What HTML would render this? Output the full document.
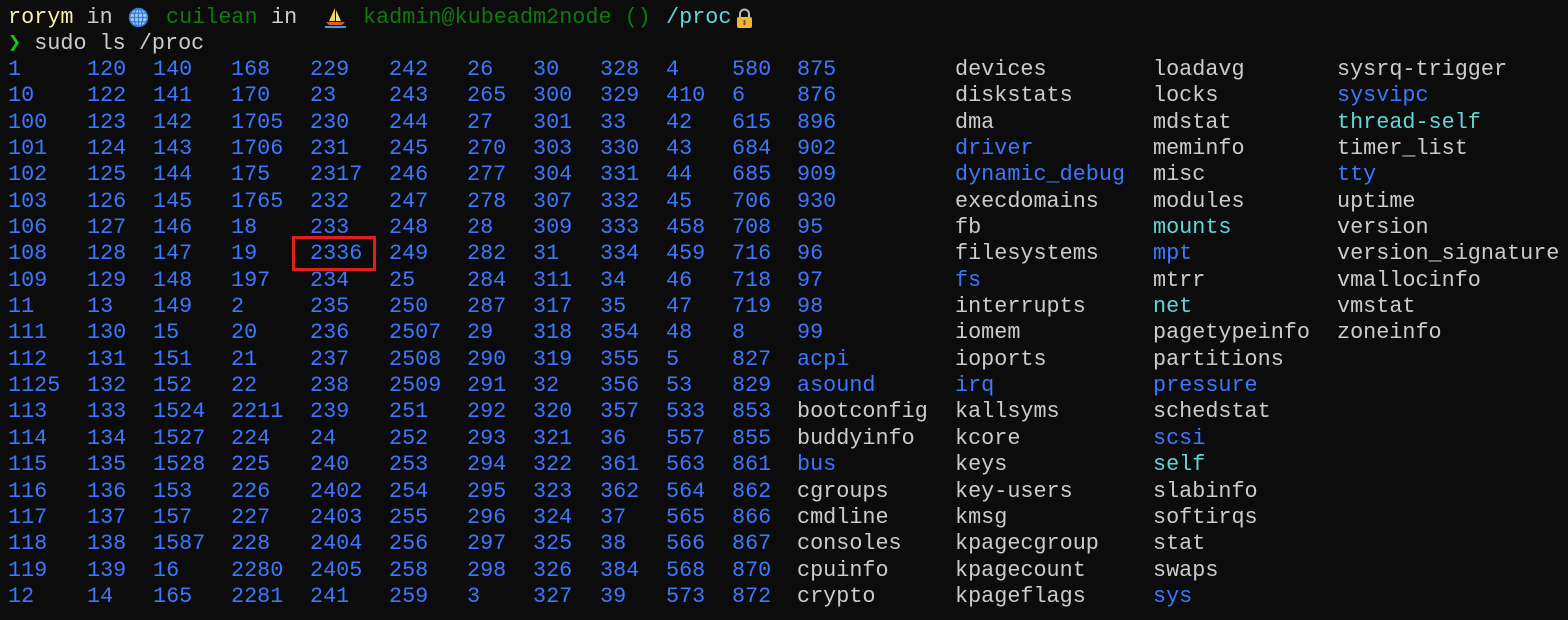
<!DOCTYPE html>
<html><head><meta charset="utf-8"><style>
html,body{margin:0;padding:0;background:#0c0c0c;width:1568px;height:620px;overflow:hidden}
body{position:relative;font-family:"Liberation Mono",monospace;font-size:21.8px;line-height:26.35px;color:#cccccc}
.c{position:absolute;top:57px;white-space:pre}
.b{color:#3b78ff}.y{color:#f9f1a5}.g{color:#0e7a0e}.cy{color:#61d6d6}.gg{color:#16c60c}
.l{position:absolute;white-space:pre}
</style></head><body>
<div class="l" style="left:8px;top:5px"><span class="y">rorym</span> in</div>
<svg style="position:absolute;left:128px;top:7px" width="21" height="21" viewBox="0 0 20 20"><circle cx="10" cy="10" r="8.5" fill="#9ccbf2" stroke="#3a7bd5" stroke-width="1.5"/><ellipse cx="10" cy="10" rx="4" ry="8.5" fill="none" stroke="#3a7bd5" stroke-width="1.2"/><path d="M1.5 10H18.5M3 6H17M3 14H17M10 1.5V18.5" stroke="#3a7bd5" stroke-width="1.2"/></svg>
<div class="l g" style="left:166px;top:5px">cuilean</div>
<div class="l" style="left:271px;top:5px">in</div>
<svg style="position:absolute;left:325px;top:7px" width="21" height="21" viewBox="0 0 21 21"><path d="M10 1L4 14H10Z" fill="#f4d25a"/><path d="M11 3L16 14H11Z" fill="#f7e08a"/><path d="M1 15H20L17 18H4Z" fill="#e2572b"/><path d="M0 19H21V21H0Z" fill="#2aa5e8"/></svg>
<div class="l g" style="left:363px;top:5px">kadmin@kubeadm2node ()</div>
<div class="l cy" style="left:666px;top:5px">/proc</div>
<svg style="position:absolute;left:736px;top:8px" width="17" height="20" viewBox="0 0 17 20"><path d="M4 9V6a4.5 4.5 0 0 1 9 0v3" fill="none" stroke="#b9b9b9" stroke-width="2"/><rect x="1" y="9" width="15" height="11" rx="2" fill="#f2b632"/><rect x="7.5" y="12" width="2" height="5" fill="#7a5a10"/></svg>
<div class="l" style="left:8px;top:31px"><span class="gg">❯</span> sudo ls /proc</div>

<div class="c b" style="left:8px">1
10
100
101
102
103
106
108
109
11
111
112
1125
113
114
115
116
117
118
119
12</div>
<div class="c b" style="left:87px">120
122
123
124
125
126
127
128
129
13
130
131
132
133
134
135
136
137
138
139
14</div>
<div class="c b" style="left:153px">140
141
142
143
144
145
146
147
148
149
15
151
152
1524
1527
1528
153
157
1587
16
165</div>
<div class="c b" style="left:231px">168
170
1705
1706
175
1765
18
19
197
2
20
21
22
2211
224
225
226
227
228
2280
2281</div>
<div class="c b" style="left:310px">229
23
230
231
2317
232
233
2336
234
235
236
237
238
239
24
240
2402
2403
2404
2405
241</div>
<div class="c b" style="left:389px">242
243
244
245
246
247
248
249
25
250
2507
2508
2509
251
252
253
254
255
256
258
259</div>
<div class="c b" style="left:467px">26
265
27
270
277
278
28
282
284
287
29
290
291
292
293
294
295
296
297
298
3</div>
<div class="c b" style="left:533px">30
300
301
303
304
307
309
31
311
317
318
319
32
320
321
322
323
324
325
326
327</div>
<div class="c b" style="left:600px">328
329
33
330
331
332
333
334
34
35
354
355
356
357
36
361
362
37
38
384
39</div>
<div class="c b" style="left:666px">4
410
42
43
44
45
458
459
46
47
48
5
53
533
557
563
564
565
566
568
573</div>
<div class="c b" style="left:732px">580
6
615
684
685
706
708
716
718
719
8
827
829
853
855
861
862
866
867
870
872</div>
<div class="c" style="left:797px"><span class="b">875
876
896
902
909
930
95
96
97
98
99
acpi
asound</span>
bootconfig
buddyinfo
<span class="b">bus</span>
cgroups
cmdline
consoles
cpuinfo
crypto</div>
<div class="c" style="left:955px">devices
diskstats
dma
<span class="b">driver
dynamic_debug</span>
execdomains
fb
filesystems
<span class="b">fs</span>
interrupts
iomem
ioports
<span class="b">irq</span>
kallsyms
kcore
keys
key-users
kmsg
kpagecgroup
kpagecount
kpageflags</div>
<div class="c" style="left:1153px">loadavg
locks
mdstat
meminfo
misc
modules
<span class="cy">mounts</span>
<span class="b">mpt</span>
mtrr
<span class="cy">net</span>
pagetypeinfo
partitions
<span class="b">pressure</span>
schedstat
<span class="b">scsi</span>
<span class="cy">self</span>
slabinfo
softirqs
stat
swaps
<span class="b">sys</span></div>
<div class="c" style="left:1337px">sysrq-trigger
<span class="b">sysvipc</span>
<span class="cy">thread-self</span>
timer_list
<span class="b">tty</span>
uptime
version
version_signature
vmallocinfo
vmstat
zoneinfo</div>
<div style="position:absolute;left:292px;top:236px;width:78px;height:29px;border:3px solid #e0201c"></div>
</body></html>
